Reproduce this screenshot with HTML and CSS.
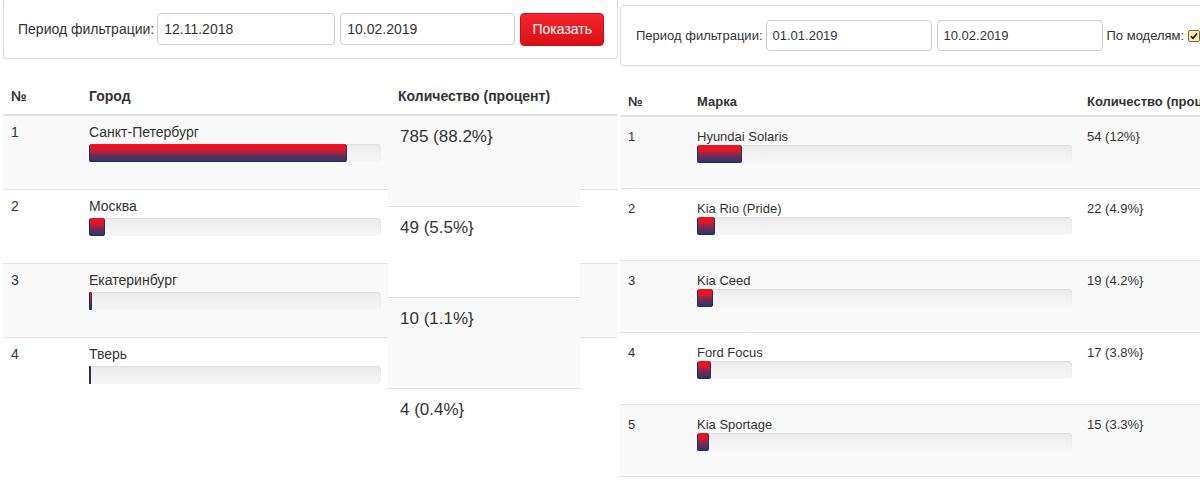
FILE: index.html
```html
<!DOCTYPE html>
<html lang="ru">
  <head>
    <meta charset="UTF-8" />
    <meta name="viewport" content="width=device-width, initial-scale=1.0" />
    <title>Статистика</title>
    <link rel="stylesheet" href="styles.css">
  </head>
  <body>
    <div class="page">
      <!-- по городам -->
      <section class="panel panel-city">
        <div class="filter">
          <span class="filter-label">Период фильтрации:</span>
          <input class="date date-from" type="text" value="12.11.2018">
          <input class="date date-to" type="text" value="10.02.2019">
          <button class="show">Показать</button>
        </div>

        <div class="head">
          <div class="c-num">№</div>
          <div class="c-name">Город</div>
          <div class="c-qty">Количество (процент)</div>
        </div>

        <div class="city-body">
          <div class="city-rows">
            <div class="city-row">
              <div class="c-num">1</div>
              <div class="c-name">Санкт-Петербург
                <div class="track"><div class="fill" style="width: 88.2%"></div></div>
              </div>
            </div>
            <div class="city-row">
              <div class="c-num">2</div>
              <div class="c-name">Москва
                <div class="track"><div class="fill" style="width: 5.5%"></div></div>
              </div>
            </div>
            <div class="city-row">
              <div class="c-num">3</div>
              <div class="c-name">Екатеринбург
                <div class="track"><div class="fill" style="width: 1.1%"></div></div>
              </div>
            </div>
            <div class="city-row">
              <div class="c-num">4</div>
              <div class="c-name">Тверь
                <div class="track"><div class="fill" style="width: 0.4%"></div></div>
              </div>
            </div>
          </div>

          <div class="city-qty">
            <div class="qty-cell">785 (88.2%}</div>
            <div class="qty-cell">49 (5.5%}</div>
            <div class="qty-cell">10 (1.1%}</div>
            <div class="qty-cell">4 (0.4%}</div>
          </div>

          <div class="city-tail">
            <div class="tail-row"></div>
            <div class="tail-row"></div>
            <div class="tail-row"></div>
            <div class="tail-row"></div>
          </div>
        </div>
      </section>

      <!-- по моделям -->
      <section class="panel panel-model">
        <div class="filter">
          <span class="filter-label">Период фильтрации:</span>
          <input class="date date-from" type="text" value="01.01.2019">
          <input class="date date-to" type="text" value="10.02.2019">
          <span class="models-label">По моделям:</span>
          <span class="check">
            <svg width="8" height="8" viewBox="0 0 8 8"><path d="M1 4.2 L3 6.3 L7 1.5" fill="none" stroke="#111" stroke-width="1.6"/></svg>
          </span>
        </div>

        <div class="head">
          <div class="c-num">№</div>
          <div class="c-name">Марка</div>
          <div class="c-qty">Количество (процент)</div>
        </div>

        <div class="model-rows">
          <div class="model-row">
            <div class="c-num">1</div>
            <div class="c-name">Hyundai Solaris
              <div class="track"><div class="fill" style="width: 12%"></div></div>
            </div>
            <div class="c-qty">54 (12%}</div>
          </div>
          <div class="model-row">
            <div class="c-num">2</div>
            <div class="c-name">Kia Rio (Pride)
              <div class="track"><div class="fill" style="width: 4.9%"></div></div>
            </div>
            <div class="c-qty">22 (4.9%}</div>
          </div>
          <div class="model-row">
            <div class="c-num">3</div>
            <div class="c-name">Kia Ceed
              <div class="track"><div class="fill" style="width: 4.2%"></div></div>
            </div>
            <div class="c-qty">19 (4.2%}</div>
          </div>
          <div class="model-row">
            <div class="c-num">4</div>
            <div class="c-name">Ford Focus
              <div class="track"><div class="fill" style="width: 3.8%"></div></div>
            </div>
            <div class="c-qty">17 (3.8%}</div>
          </div>
          <div class="model-row">
            <div class="c-num">5</div>
            <div class="c-name">Kia Sportage
              <div class="track"><div class="fill" style="width: 3.3%"></div></div>
            </div>
            <div class="c-qty">15 (3.3%}</div>
          </div>
        </div>
      </section>
    </div>
  </body>
</html>
```

FILE: styles.css
```css
* {
  box-sizing: border-box;
}

body {
  margin: 0;
  font-family: "Liberation Sans", Arial, sans-serif;
  color: #333;
  background: #fff;
}

.page {
  display: flex;
  width: 1200px;
  height: 480px;
  overflow: hidden;
}

.panel {
  flex: none;
}

/* filter bar */
.filter {
  display: flex;
  align-items: center;
  border: 1px solid #dcdcdc;
  box-shadow: 0 1px 2px rgba(0, 0, 0, 0.06);
  background: #fff;
}

.date {
  height: 32px;
  border: 1px solid #cfcfcf;
  border-radius: 4px;
  padding: 0 6px;
  font-family: inherit;
  color: #333;
  background: #fff;
}

.show {
  height: 33px;
  width: 84px;
  margin-left: 5px;
  border: 1px solid #c90e16;
  border-radius: 4px;
  background: linear-gradient(#f3262d, #dc0f17);
  color: #fff;
  font-family: inherit;
  font-size: 14px;
}

/* bars */
.track {
  height: 18px;
  border-radius: 4px;
  background: linear-gradient(#ececec, #f6f6f6);
  box-shadow: inset 0 1px 2px rgba(0, 0, 0, 0.07);
}

.fill {
  height: 100%;
  min-width: 2px;
  border-radius: 3px;
  background: linear-gradient(#ff0d18 0%, #d81a2c 30%, #6a2b55 65%, #1f3b78 100%);
  box-shadow: inset 1px -1px 0 #1b2d5c, inset -1px 0 0 rgba(27, 45, 92, 0.8);
}

/* left panel: cities */
.panel-city {
  width: 618px;
  padding-left: 3px;
  font-size: 14px;
}

.panel-city .filter {
  height: 59px;
  border-top: none;
  border-radius: 0 0 4px 4px;
  padding-left: 14px;
}

.panel-city .filter-label {
  margin-right: 3px;
}

.panel-city .date {
  font-size: 14px;
}

.panel-city .date-from {
  width: 178px;
}

.panel-city .date-to {
  width: 175px;
  margin-left: 5px;
}

.panel-city .head {
  display: flex;
  height: 57px;
  align-items: flex-end;
  padding-bottom: 10px;
  border-bottom: 2px solid #e2e2e2;
  font-weight: bold;
}

.panel-city .c-num {
  width: 86px;
  padding-left: 8px;
  flex: none;
}

.panel-city .c-name {
  width: 299px;
  padding-right: 7px;
  flex: none;
}

.panel-city .head .c-qty {
  padding-left: 10px;
}

.city-body {
  display: flex;
}

.city-rows {
  width: 385px;
}

.city-row {
  display: flex;
  height: 74px;
  padding-top: 8px;
  line-height: 17px;
  border-bottom: 1px solid #e4e4e4;
}

.city-row:nth-child(odd),
.tail-row:nth-child(odd),
.qty-cell:nth-child(odd),
.model-row:nth-child(odd) {
  background: #f9f9f9;
}

.city-row:last-child,
.qty-cell:last-child,
.tail-row:last-child {
  border-bottom: none;
}

.city-row .track {
  margin-top: 3px;
}

.city-qty {
  width: 192px;
}

.qty-cell {
  height: 91px;
  padding: 11px 0 0 12px;
  font-size: 17px;
  line-height: 20px;
  border-bottom: 1px solid #e4e4e4;
}

.city-tail {
  width: 38px;
}

.tail-row {
  height: 74px;
  border-bottom: 1px solid #e4e4e4;
}

/* right panel: models */
.panel-model {
  width: 580px;
  margin-left: 2px;
  overflow: hidden;
  font-size: 13px;
}

.panel-model .filter {
  width: 600px;
  height: 61px;
  margin-top: 5px;
  border-radius: 4px 0 0 4px;
  padding-left: 15px;
}

.panel-model .filter-label {
  margin-right: 3px;
}

.panel-model .date {
  font-size: 13px;
  height: 31px;
}

.panel-model .date-from {
  width: 166px;
}

.panel-model .date-to {
  width: 166px;
  margin-left: 5px;
}

.models-label {
  margin-left: 4px;
}

.check {
  display: inline-flex;
  align-items: center;
  justify-content: center;
  width: 12px;
  height: 12px;
  margin-left: 4px;
  border: 1px solid #7d6a2f;
  border-radius: 2px;
  background: #fbeab0;
}

.panel-model .head {
  display: flex;
  height: 51px;
  align-items: flex-end;
  padding-bottom: 6px;
  border-bottom: 2px solid #e2e2e2;
  font-weight: bold;
  white-space: nowrap;
}

.panel-model .c-num {
  width: 77px;
  padding-left: 8px;
  flex: none;
}

.panel-model .c-name {
  width: 390px;
  padding-right: 15px;
  flex: none;
}

.panel-model .c-qty {
  white-space: nowrap;
}

.model-row {
  display: flex;
  height: 72px;
  padding-top: 12px;
  line-height: 16px;
  border-bottom: 1px solid #e4e4e4;
}
```
